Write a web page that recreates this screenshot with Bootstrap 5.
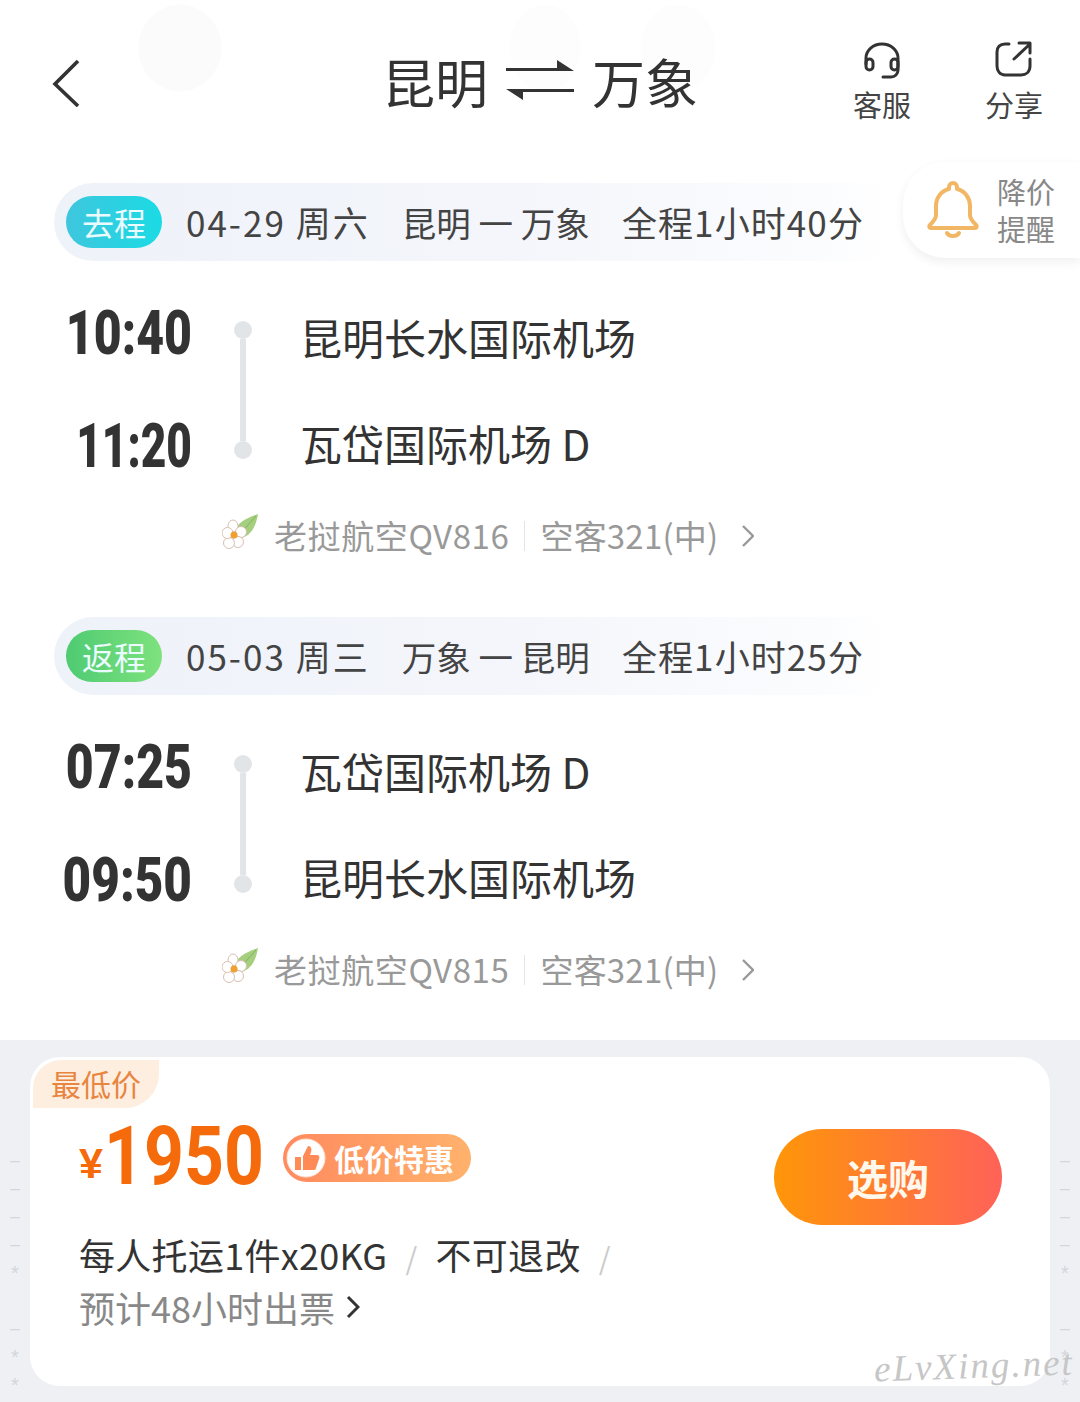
<!DOCTYPE html>
<html lang="zh">
<head>
<meta charset="utf-8">
<title>昆明 万象</title>
<link href="https://cdn.jsdelivr.net/npm/bootstrap@5.3.0/dist/css/bootstrap.min.css" rel="stylesheet">
<style>
html,body{margin:0;background:#fff}
body{width:1080px;height:1402px;overflow:hidden;color:#333;font-family:"Noto Sans CJK SC","Noto Sans",sans-serif}
.shot{width:1080px;height:1402px;display:flex;flex-direction:column;position:relative;overflow:hidden}
.shot>*{flex:none}
.top-head{height:162px;background:
 radial-gradient(ellipse 42px 44px at 180px 48px,#fbfbfb 97%,transparent 100%),
 radial-gradient(ellipse 36px 44px at 545px 48px,#fdfdfd 97%,transparent 100%),
 radial-gradient(ellipse 38px 44px at 678px 48px,#fdfdfd 97%,transparent 100%)}
.head-side{flex:1 1 0;min-width:0}
.back-wrap svg{display:block;margin:4px 0 0 52px}
.head-title{font-size:53px;line-height:60px;color:#333;margin-top:0;gap:18px}
.head-title svg{margin-top:-2px}
.head-actions{gap:32px}
.head-act{width:100px;font-size:29px;line-height:36px;color:#444}
.head-act:last-child{margin-right:16px}
.head-act svg{display:block;margin-bottom:6px}
.route-wrap{padding-top:21px}
.route-bar{margin-left:54px;width:832px;height:78px;border-radius:39px 0 0 39px;background:linear-gradient(90deg,#eef2f9 0%,#f4f6fb 55%,#fbfcfe 92%,#fff 100%);padding-left:12px}
.route-pill{width:96px;height:52px;border-radius:26px;color:#eafcff;font-size:32px;line-height:52px;text-align:center}
.pill-go{background:linear-gradient(90deg,#3ec6dd,#1bdbe4)}
.pill-back{background:linear-gradient(90deg,#4fcb72,#7ee27e)}
.route-text{width:678px;margin-left:24px;font-size:34.5px;line-height:52px;color:#444;white-space:nowrap}
.rt-date{font-size:35px;letter-spacing:2px}
.rt-total{font-size:35px;letter-spacing:1.1px}
.bell-card{position:absolute;left:903px;top:0;width:177px;height:96px;background:#fff;border-radius:42px 0 0 42px;box-shadow:0 4px 10px rgba(60,70,90,.08);padding-left:24px;gap:18px}
.bell-text{font-size:29px;line-height:37px;color:#888}
.flight-row{height:180px;margin-top:39px}
.time-col{width:192px;padding:3px 0 4px;text-align:right}
.time-txt{font-family:"Roboto",sans-serif;font-weight:900;font-size:61px;line-height:60px;color:#333;transform:scaleX(.79);transform-origin:right center}
.time-ones{transform:scaleX(.725)}
.time-wide{transform:scaleX(.81)}
.track-col{width:18px;margin-left:42px;padding:21px 0}
.track-dot{width:18px;height:18px;border-radius:50%;background:#e2e5e8;flex:none}
.track-line{width:6px;flex:1 1 auto;background:#e2e5e8}
.port-col{margin-left:48px;padding:9px 0 9px;font-size:42px;line-height:56px;color:#333;white-space:nowrap}
.airline-row{margin-top:28px;height:56px;padding-left:222px;font-size:33px;letter-spacing:.6px;color:#999;white-space:nowrap}
.airline-row svg{flex:none}
.air-logo{margin-top:-6px}
.air-name{margin-left:16px}
.air-sep{width:1px;height:30px;background:#e4e4e4;margin:0 15px}
.air-type{letter-spacing:.2px}
.air-arrow{margin-left:24px}
.gap-between{height:32px}
.bottom-zone{margin-top:42px;height:362px;background:#eef0f4;padding:17px 0 16px}
.tick-col{width:30px;flex:none;padding-top:90px;text-align:center;color:#d3d6db;font-family:"Liberation Sans",sans-serif;font-size:17px}
.tick-item{height:28px;line-height:28px}
.tick-star{font-size:20px}
.price-card{flex:1 1 auto;background:#fff;border-radius:30px;overflow:hidden}
.low-tag{margin:3px 0 0 3px;width:126px;height:48px;background:#fdeee0;border-radius:28px 0 34px 0;color:#e8853f;font-size:30px;line-height:46px;padding-left:18px}
.price-left{padding-left:49px;padding-top:12px}
.price-row{height:72px}
.price-yen{font-size:43px;line-height:50px;font-weight:700;color:#f56a0a;font-family:"Liberation Sans","Roboto",sans-serif;margin-top:14px}
.price-num{display:block;width:158px;font-family:"Roboto",sans-serif;font-weight:700;font-size:82px;line-height:72px;color:#f56a0a;margin-left:1px;transform:scaleX(.85);transform-origin:left center;white-space:nowrap}
.deal-pill{margin-left:21px;width:188px;height:48px;border-radius:24px;background:linear-gradient(90deg,#ff8a5e,#ffb26c);padding-left:1px;color:#fff;font-size:30px;font-weight:700;margin-top:4px;gap:6px}
.rule-one{margin-top:37px;font-size:36px;letter-spacing:.3px;line-height:50px;color:#333;white-space:nowrap}
.rule-slash{color:#ccc;margin:0 18px;font-size:30px}
.rule-two{font-size:36px;line-height:50px;color:#888;white-space:nowrap;gap:11px}
.buy-btn{width:228px;height:96px;border-radius:48px;border:0;margin:21px 48px 0 0;background:linear-gradient(90deg,#ff9608,#ff6258);color:#fff8ec;font-size:41px;font-weight:700;line-height:96px;padding:0;flex:none}
.buy-btn:hover{background:linear-gradient(90deg,#ff9608,#ff6258);color:#fff8ec}
.water-mark{position:absolute;left:874px;top:1342px;font-family:"Liberation Serif",serif;font-style:italic;font-size:37px;line-height:48px;color:#c6c6c6;letter-spacing:2px;white-space:nowrap;transform:rotate(-2deg)}
</style>
</head>
<body>
<div class="shot">
  <header class="top-head d-flex align-items-center">
    <div class="head-side back-wrap">
      <svg width="28" height="48" viewBox="0 0 28 48" fill="none" stroke="#333" stroke-width="3.6"><path d="M26 2 3 25l23 22"/></svg>
    </div>
    <div class="head-title d-flex align-items-center">
      <span>昆明</span>
      <svg width="68" height="40" viewBox="0 0 68 40" fill="#333"><path d="M0 8h51V0l17 11H0z"/><path d="M0 29h68v3H17v8z"/></svg>
      <span>万象</span>
    </div>
    <div class="head-side head-actions d-flex justify-content-end">
      <div class="head-act d-flex flex-column align-items-center">
        <svg width="40" height="40" viewBox="0 0 40 40" fill="none" stroke="#333" stroke-width="3" stroke-linecap="round"><path d="M4 24v-6a16 14 0 0 1 32 0v6"/><rect x="4" y="19" width="7" height="11" rx="3.500"/><rect x="29" y="19" width="7" height="11" rx="3.500"/><path d="M36 25v5c0 4-3 7-7 7h-8"/></svg>
        <span>客服</span>
      </div>
      <div class="head-act d-flex flex-column align-items-center">
        <svg width="40" height="40" viewBox="0 0 40 40" fill="none" stroke="#333" stroke-width="3" stroke-linecap="round" stroke-linejoin="round"><path d="M15 4h-4c-5 0-8 3-8 8v14c0 5 3 9 8 9h16c5 0 9-3 9-9v-7"/><path d="M20 19 36 4M25 3h11v10"/></svg>
        <span>分享</span>
      </div>
    </div>
  </header>

  <section class="route-wrap position-relative">
    <div class="route-bar d-flex align-items-center">
      <span class="route-pill pill-go">去程</span>
      <div class="route-text d-flex justify-content-between align-items-center">
        <span class="rt-date">04-29 周六</span><span>昆明 一 万象</span><span class="rt-total">全程1小时40分</span>
      </div>
    </div>
    <div class="bell-card d-flex align-items-center">
      <svg width="52" height="60" viewBox="0 0 52 60" fill="none" stroke="#f2b764" stroke-width="4" stroke-linejoin="round" stroke-linecap="round"><path d="M26 3c-2.500 0-4 2-4 4v2C14 11 9 18 9 26v9c0 4-3 7-6 10-1 1-1 3 1 3h44c2 0 2-2 1-3-3-3-6-6-6-10v-9c0-8-5-15-13-17V7c0-2-1.500-4-4-4z"/><path d="M20 53c2 4 10 4 12 0"/></svg>
      <div class="bell-text"><div>降价</div><div>提醒</div></div>
    </div>
    <div class="flight-row d-flex">
      <div class="time-col d-flex flex-column justify-content-between"><div class="time-txt">10:40</div><div class="time-txt time-ones">11:20</div></div>
      <div class="track-col d-flex flex-column align-items-center"><div class="track-dot"></div><div class="track-line"></div><div class="track-dot"></div></div>
      <div class="port-col d-flex flex-column justify-content-between"><div>昆明长水国际机场</div><div>瓦岱国际机场 D</div></div>
    </div>
    <div class="airline-row d-flex align-items-center">
      <svg class="air-logo" width="36" height="38" viewBox="0 0 36 38"><path d="M13 18C14 9 24 4 36 0c-2 12-7 22-17 24z" fill="#a5cf7e"/><path d="M17 21 34 2" stroke="#7fb45a" fill="none"/><g fill="#fff" stroke="#d9bfb4"><ellipse cx="11" cy="12" rx="5" ry="6"/><circle cx="19" cy="18" r="5.500"/><circle cx="16" cy="28" r="5.500"/><circle cx="7" cy="29" r="5.500"/><circle cx="5.500" cy="19" r="5.500"/></g><circle cx="12" cy="21" r="3.500" fill="#f0a030"/></svg>
      <span class="air-name">老挝航空QV816</span><span class="air-sep"></span><span class="air-type">空客321(中)</span>
      <svg class="air-arrow" width="12" height="22" viewBox="0 0 12 22" fill="none" stroke="#999" stroke-width="2.4"><path d="m1 1 10 10L1 21"/></svg>
    </div>
  </section>

  <div class="gap-between"></div>

  <section class="route-wrap position-relative">
    <div class="route-bar d-flex align-items-center">
      <span class="route-pill pill-back">返程</span>
      <div class="route-text d-flex justify-content-between align-items-center">
        <span class="rt-date">05-03 周三</span><span>万象 一 昆明</span><span class="rt-total">全程1小时25分</span>
      </div>
    </div>
    <div class="flight-row d-flex">
      <div class="time-col d-flex flex-column justify-content-between"><div class="time-txt">07:25</div><div class="time-txt time-wide">09:50</div></div>
      <div class="track-col d-flex flex-column align-items-center"><div class="track-dot"></div><div class="track-line"></div><div class="track-dot"></div></div>
      <div class="port-col d-flex flex-column justify-content-between"><div>瓦岱国际机场 D</div><div>昆明长水国际机场</div></div>
    </div>
    <div class="airline-row d-flex align-items-center">
      <svg class="air-logo" width="36" height="38" viewBox="0 0 36 38"><path d="M13 18C14 9 24 4 36 0c-2 12-7 22-17 24z" fill="#a5cf7e"/><path d="M17 21 34 2" stroke="#7fb45a" fill="none"/><g fill="#fff" stroke="#d9bfb4"><ellipse cx="11" cy="12" rx="5" ry="6"/><circle cx="19" cy="18" r="5.500"/><circle cx="16" cy="28" r="5.500"/><circle cx="7" cy="29" r="5.500"/><circle cx="5.500" cy="19" r="5.500"/></g><circle cx="12" cy="21" r="3.500" fill="#f0a030"/></svg>
      <span class="air-name">老挝航空QV815</span><span class="air-sep"></span><span class="air-type">空客321(中)</span>
      <svg class="air-arrow" width="12" height="22" viewBox="0 0 12 22" fill="none" stroke="#999" stroke-width="2.4"><path d="m1 1 10 10L1 21"/></svg>
    </div>
  </section>

  <section class="bottom-zone d-flex">
    <div class="tick-col"><div class="tick-item">–</div><div class="tick-item">–</div><div class="tick-item">–</div><div class="tick-item">–</div><div class="tick-item tick-star">*</div><div class="tick-item"></div><div class="tick-item">–</div><div class="tick-item tick-star">*</div><div class="tick-item tick-star">*</div></div>
    <div class="price-card">
      <div class="low-tag">最低价</div>
      <div class="d-flex justify-content-between">
        <div class="price-left">
          <div class="price-row d-flex align-items-center">
            <span class="price-yen">¥</span><span class="price-num">1950</span>
            <span class="deal-pill d-flex align-items-center">
              <svg width="44" height="44" viewBox="0 0 44 44"><circle cx="22" cy="22" r="19" fill="#fff" stroke="#ffe3d4" stroke-width="1"/><path d="M11 21h6v13h-6zM19 20l5-10c3 0 4 3 3 6l-1 3h7c2 0 3 2 2 4l-3 9c0 1-1 2-2 2H19z" fill="#ff8a55"/></svg>
              <span>低价特惠</span>
            </span>
          </div>
          <div class="rule-one"><span>每人托运1件x20KG</span><span class="rule-slash">/</span><span>不可退改</span><span class="rule-slash">/</span></div>
          <div class="rule-two d-flex align-items-center"><span>预计48小时出票</span><svg width="14" height="24" viewBox="0 0 14 24" fill="none" stroke="#333" stroke-width="3"><path d="m2 2 10 10L2 22"/></svg></div>
        </div>
        <button type="button" class="btn buy-btn">选购</button>
      </div>
    </div>
    <div class="tick-col"><div class="tick-item">–</div><div class="tick-item">–</div><div class="tick-item">–</div><div class="tick-item">–</div><div class="tick-item tick-star">*</div><div class="tick-item"></div><div class="tick-item">–</div><div class="tick-item tick-star">*</div><div class="tick-item tick-star">*</div></div>
  </section>
  <div class="water-mark">eLvXing.net</div>
</div>
<script src="https://cdn.jsdelivr.net/npm/bootstrap@5.3.0/dist/js/bootstrap.bundle.min.js"></script>
</body>
</html>
